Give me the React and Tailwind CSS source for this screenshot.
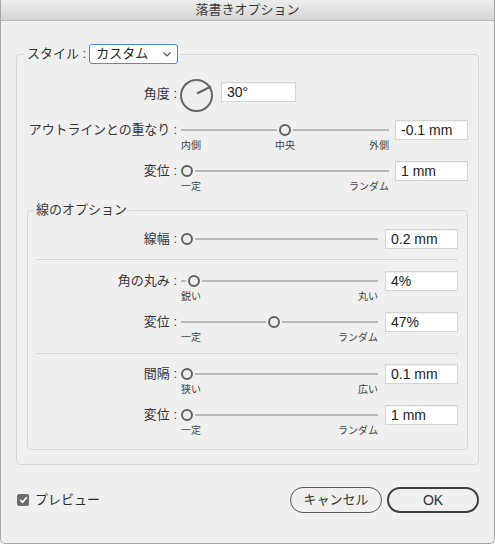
import React from "react";

const FONT = "font-['Liberation_Sans','Noto_Sans_CJK_JP',sans-serif]";

const Field = ({ value, className = "" }) => (
  <div
    className={`h-[20px] w-[73px] shrink-0 border border-[#d4d4d4] bg-white pl-[5px] text-[14px] leading-[18px] text-[#222] shadow-[inset_0_1px_0_rgba(0,0,0,0.05)] ${className}`}
  >
    {value}
  </div>
);

const SliderRow = ({ label, value, pct, marks, labelW, gap, className = "", tight = false }) => (
  <div className={`flex items-start ${className}`}>
    <div
      className={`flex h-[20px] shrink-0 justify-end whitespace-nowrap text-[13px] leading-[20px] text-[#363636] ${tight ? "tracking-[-0.15px]" : ""}`}
      style={{ width: labelW }}
    >
      {label}
    </div>
    <div className="ml-[4px] flex-1">
      <div className="relative flex h-[20px] items-center">
        <div className="h-[2px] w-full bg-[#b8b8b8]" />
        {/* thumb over the track */}
        <div
          className="absolute top-[4px] h-[12px] w-[12px] rounded-full border-2 border-[#626262] bg-[#efefef] ring-2 ring-[#efefef]"
          style={{ left: `calc(${pct}% - ${(pct * 12) / 100}px)` }}
        />
      </div>
      {marks && (
        <div className="flex justify-between text-[10px] leading-[11px] text-[#444]">
          {marks.map((m) => (
            <span key={m}>{m}</span>
          ))}
        </div>
      )}
    </div>
    <Field value={value} className={gap} />
  </div>
);

export default function App() {
  return (
    <div
      className={`${FONT} flex h-[544px] w-[495px] flex-col overflow-hidden rounded-b-[5px] border-x border-b border-[#a8a8a8] bg-[#efefef]`}
    >
      {/* title bar */}
      <div className="h-[21px] shrink-0 border-b border-[#b8b8b8] bg-gradient-to-b from-[#ededed] to-[#d5d5d5] text-center text-[13px] leading-[20px] text-[#3a3a3a]">
        落書きオプション
      </div>

      <div className="px-[15px] pt-[23px]">
        <fieldset className="rounded-[4px] border border-[#d6d6d6] px-[10px] pb-[14px]">
          <legend className="-ml-[2px] px-[2px]">
            <div className="flex h-[20px] items-center">
              <span className="text-[13px] leading-[20px] text-[#363636]">スタイル :</span>
              <div className="ml-[3px] flex h-[20px] w-[89px] items-center justify-between rounded-[3px] border border-[#4a8af4] bg-white pl-[6px] pr-[6px] text-[13px] leading-[18px] text-[#222]">
                <span>カスタム</span>
                <svg width="8" height="5" viewBox="0 0 8 5">
                  <polyline points="0.5,0.5 4,4 7.5,0.5" fill="none" stroke="#555" strokeWidth="1.1" />
                </svg>
              </div>
            </div>
          </legend>

          {/* angle */}
          <div className="flex items-start pt-[15px]">
            <div className="h-[33px] w-[150px] shrink-0 text-right text-[13px] leading-[30px] text-[#363636]">
              角度 :
            </div>
            <svg className="ml-[3px] shrink-0" width="33" height="33" viewBox="0 0 33 33">
              <circle cx="16.5" cy="16.5" r="15.5" fill="none" stroke="#666" strokeWidth="2" />
              <line x1="17" y1="14.5" x2="31" y2="7.5" stroke="#666" strokeWidth="2" />
            </svg>
            <Field value="30°" className="ml-[8px] mt-[3px] w-[75px]" />
          </div>

          <SliderRow
            className="mt-[8px]"
            label="アウトラインとの重なり :"
            value="-0.1 mm"
            pct={50}
            marks={["内側", "中央", "外側"]}
            labelW={150}
            gap="ml-[6px]"
            tight
          />
          <SliderRow
            className="mt-[10px]"
            label="変位 :"
            value="1 mm"
            pct={0}
            marks={["一定", "ランダム"]}
            labelW={150}
            gap="ml-[6px]"
          />

          <fieldset className="mt-[10px] rounded-[4px] border border-[#d6d6d6] pb-[13px] pl-[8px] pr-[9px]">
            <legend className="-ml-[2px] px-[2px] text-[13px] leading-[16px] text-[#363636]">
              線のオプション
            </legend>
            <div className="pt-[11px]">
              <SliderRow label="線幅 :" value="0.2 mm" pct={0} labelW={141} gap="ml-[7px]" />
              <div className="mt-[10px] h-[1px] bg-[#d6d6d6]" />
              <SliderRow
                className="mt-[11px]"
                label="角の丸み :"
                value="4%"
                pct={4}
                marks={["鋭い", "丸い"]}
                labelW={141}
                gap="ml-[7px]"
              />
              <SliderRow
                className="mt-[10px]"
                label="変位 :"
                value="47%"
                pct={47}
                marks={["一定", "ランダム"]}
                labelW={141}
                gap="ml-[7px]"
              />
              <div className="mt-[10px] h-[1px] bg-[#d6d6d6]" />
              <SliderRow
                className="mt-[10px]"
                label="間隔 :"
                value="0.1 mm"
                pct={0}
                marks={["狭い", "広い"]}
                labelW={141}
                gap="ml-[7px]"
              />
              <SliderRow
                className="mt-[10px]"
                label="変位 :"
                value="1 mm"
                pct={0}
                marks={["一定", "ランダム"]}
                labelW={141}
                gap="ml-[7px]"
              />
            </div>
          </fieldset>
        </fieldset>

        {/* footer */}
        <div className="mt-[22px] flex items-center justify-between">
          <div className="ml-[1px] flex items-center">
            <div className="flex h-[12px] w-[12px] items-center justify-center rounded-[2px] bg-[#6b6b6b]">
              <svg width="9" height="8" viewBox="0 0 9 8">
                <polyline points="1.3,4.2 3.5,6.3 7.8,1.3" fill="none" stroke="#fff" strokeWidth="1.7" />
              </svg>
            </div>
            <span className="ml-[6px] text-[13px] leading-[16px] text-[#2e2e2e]">プレビュー</span>
          </div>
          <div className="flex items-center gap-[5px]">
            <button className="h-[26px] w-[92px] rounded-full border border-[#555] text-[13px] leading-[24px] text-[#333]">
              キャンセル
            </button>
            <button className="h-[26px] w-[92px] rounded-full border-2 border-[#404040] text-[14px] leading-[22px] text-[#333]">
              OK
            </button>
          </div>
        </div>
      </div>
    </div>
  );
}
